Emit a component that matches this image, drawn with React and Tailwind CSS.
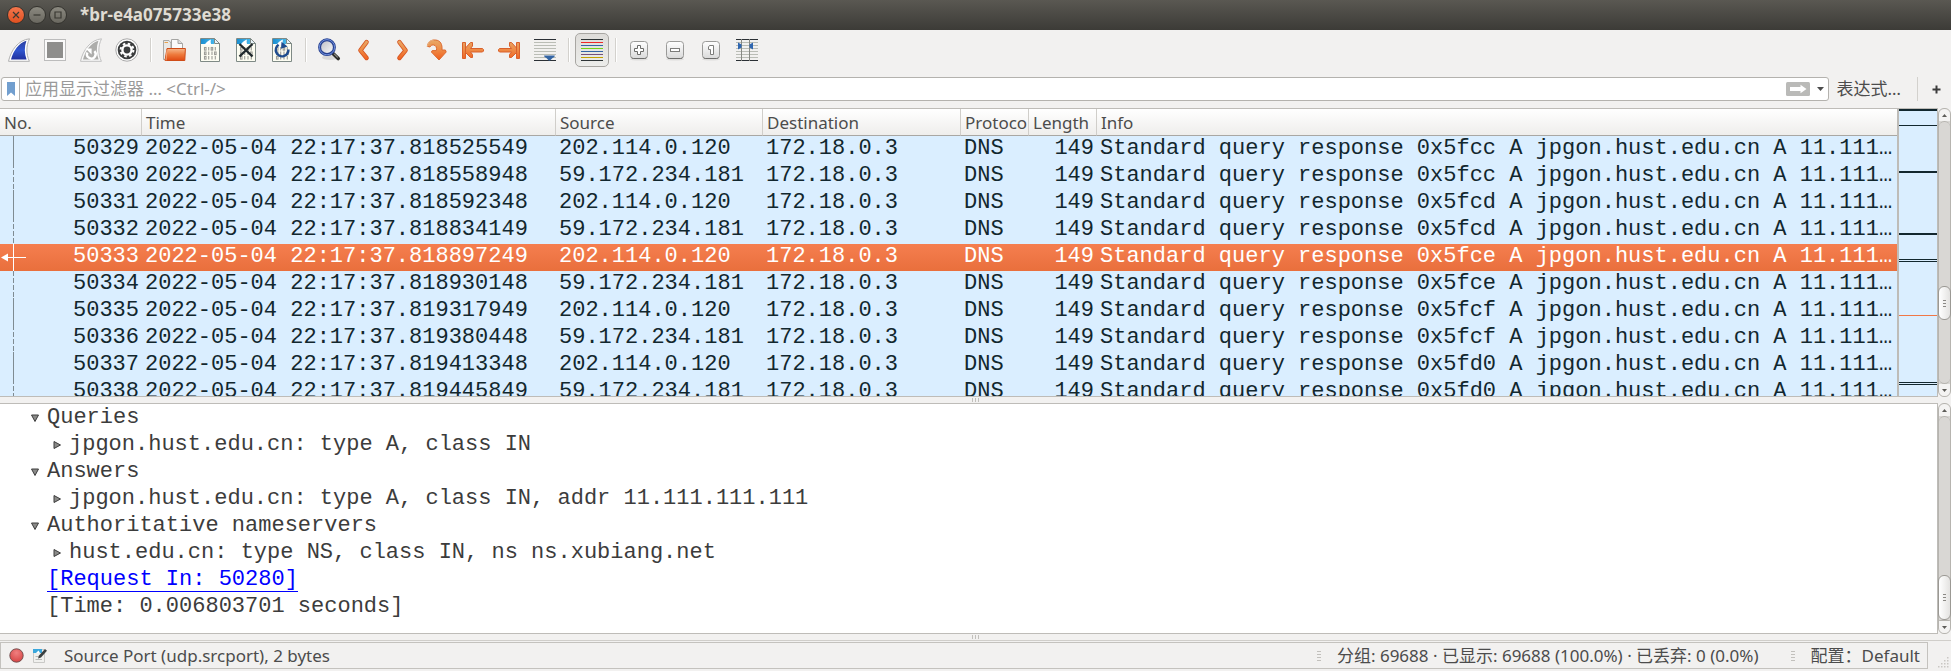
import React from "react";

const UI = "font-['Noto_Sans','Noto_Sans_CJK_SC',sans-serif]";
const MONO = "font-['Liberation_Mono','DejaVu_Sans_Mono',monospace]";

const packets = [
  ["50329", "2022-05-04 22:17:37.818525549", "202.114.0.120", "0x5fcc"],
  ["50330", "2022-05-04 22:17:37.818558948", "59.172.234.181", "0x5fcc"],
  ["50331", "2022-05-04 22:17:37.818592348", "202.114.0.120", "0x5fcd"],
  ["50332", "2022-05-04 22:17:37.818834149", "59.172.234.181", "0x5fcd"],
  ["50333", "2022-05-04 22:17:37.818897249", "202.114.0.120", "0x5fce"],
  ["50334", "2022-05-04 22:17:37.818930148", "59.172.234.181", "0x5fce"],
  ["50335", "2022-05-04 22:17:37.819317949", "202.114.0.120", "0x5fcf"],
  ["50336", "2022-05-04 22:17:37.819380448", "59.172.234.181", "0x5fcf"],
  ["50337", "2022-05-04 22:17:37.819413348", "202.114.0.120", "0x5fd0"],
  ["50338", "2022-05-04 22:17:37.819445849", "59.172.234.181", "0x5fd0"],
];
const selected = "50333";

/* ---------- toolbar icons ---------- */

function Svg({ children }) {
  return (
    <svg width="24" height="24" viewBox="0 0 24 24" className="block shrink-0" aria-hidden="true">
      {children}
    </svg>
  );
}

function Defs() {
  return (
    <svg width="0" height="0" className="absolute" aria-hidden="true">
      <defs>
        <linearGradient id="blue" x1="0" y1="0" x2="0" y2="1">
          <stop offset="0" stopColor="#2b3f9e" />
          <stop offset="0.5" stopColor="#2f55cf" />
          <stop offset="1" stopColor="#1f2f9e" />
        </linearGradient>
        <linearGradient id="orange" x1="0" y1="0" x2="0" y2="24" gradientUnits="userSpaceOnUse">
          <stop offset="0.1" stopColor="#e8a866" />
          <stop offset="0.5" stopColor="#ee8a45" />
          <stop offset="0.9" stopColor="#f0601f" />
        </linearGradient>
        <linearGradient id="folder" x1="0" y1="0" x2="0" y2="1">
          <stop offset="0" stopColor="#f6b98c" />
          <stop offset="0.5" stopColor="#ee7a3c" />
          <stop offset="1" stopColor="#e04a12" />
        </linearGradient>
        <linearGradient id="key" x1="0" y1="0" x2="0" y2="1">
          <stop offset="0" stopColor="#ffffff" />
          <stop offset="1" stopColor="#d9d9d9" />
        </linearGradient>
        <linearGradient id="sky" x1="0" y1="0" x2="1" y2="0">
          <stop offset="0" stopColor="#1c8fd0" />
          <stop offset="1" stopColor="#45b6ea" />
        </linearGradient>
        <linearGradient id="lens" x1="0" y1="0" x2="1" y2="1">
          <stop offset="0" stopColor="#b9b9c0" />
          <stop offset="1" stopColor="#ffffff" />
        </linearGradient>
        <radialGradient id="red" cx="0.5" cy="0.3" r="0.7">
          <stop offset="0" stopColor="#f08080" />
          <stop offset="1" stopColor="#d64545" />
        </radialGradient>
      </defs>
    </svg>
  );
}

const Fin = () => (
  <Svg>
    <path d="M1.5 23.3C4 12 11.5 1.8 22.5 0.8C19 8 19 16 22.4 23.3Z" fill="#fff" stroke="#b0b0b0" />
    <path d="M4 21.6C6.4 12.6 12 4.8 19.4 2.8C17.2 9 17.4 15.6 19.6 21.6Z" fill="url(#blue)" />
  </Svg>
);
const Stop = () => (
  <Svg>
    <rect x="1.5" y="1.5" width="21" height="21" fill="#fafafa" stroke="#bcbcbc" />
    <rect x="4" y="4" width="16" height="16" fill="#8e8e8c" />
  </Svg>
);
const Restart = () => (
  <Svg>
    <path d="M1.5 23.3C4 12 11.5 1.8 22.5 0.8C19 8 19 16 22.4 23.3Z" fill="#f8f8f8" stroke="#c0c0c0" />
    <path d="M4 21.6C6.4 12.6 12 4.8 19.4 2.8C17.2 9 17.4 15.6 19.6 21.6Z" fill="#adadab" />
    <path d="M8.4 14.4A4.3 4.3 0 1 0 15.4 13.2" fill="none" stroke="#fff" strokeWidth="2.4" />
    <path d="M6.6 10.6H12.6V16.4Z" fill="#fff" />
  </Svg>
);
const Options = () => (
  <Svg>
    <circle cx="12" cy="12" r="11.2" fill="#fff" stroke="#a9a9a9" />
    <circle cx="12" cy="12" r="9.3" fill="#3b3d3e" />
    <circle cx="12" cy="12" r="4.6" fill="none" stroke="#fff" strokeWidth="2.4" />
    <circle cx="12" cy="12" r="6.4" fill="none" stroke="#fff" strokeWidth="2" strokeDasharray="2.5 2.526" />
  </Svg>
);
const Open = () => (
  <Svg>
    <path d="M1.5 2.5H7L9 5V21.5H1.5Z" fill="#e9e9e7" stroke="#a9a9a7" />
    <path d="M2.5 4.5H6" stroke="#e8a24f" />
    <path d="M9.5 1.5H16L20.5 5.5V14H9.5Z" fill="#fbfbfb" stroke="#a5a5a3" />
    <path d="M16 1.5V5.5H20.5" fill="#ddd" stroke="#a5a5a3" />
    <path d="M5 10.5H23.4L22.8 22.5H3Z" fill="url(#folder)" stroke="#cf4c18" />
    <path d="M4 22.4L5 12" stroke="#f4a578" />
  </Svg>
);
function DocBase({ children }) {
  return (
    <Svg>
      <path d="M2.5 0.5H16.5L21.5 5.5V23.5H2.5Z" fill="#fdfdf2" stroke="#7f8a86" />
      <path d="M3 1H16V6H3Z" fill="url(#sky)" />
      <path d="M6.5 7C8 4.5 10 2.6 13 1.6C12.4 3.6 12.6 5.4 13.6 7Z" fill="#fff" />
      <path d="M16.5 0.5V5.5H21.5Z" fill="#e8f3f8" stroke="#7f8a86" />
      <g fill="none" stroke="#9c9c96" strokeWidth="1.1">
        {[9.5, 14, 18.5].map((y, r) => (
          <g key={y}>
            <rect x="6.5" y={y} width="1.5" height="2.6" />
            <path d={`M10.7 ${y - 0.5}v3.6`} />
            {r === 2 ? <path d={`M14 ${y - 0.5}v3.6`} /> : r === 0 ? <rect x="13.2" y={y} width="1.5" height="2.6" /> : <path d={`M14 ${y - 0.5}v3.6`} />}
            {r === 1 ? <rect x="16.6" y={y} width="1.5" height="2.6" /> : <path d={`M17.3 ${y - 0.5}v3.6`} />}
          </g>
        ))}
      </g>
      {children}
    </Svg>
  );
}
const Save = () => <DocBase />;
const Close = () => (
  <DocBase>
    <path d="M5.5 6L18.5 18.5M18.5 6L5.5 18.5" stroke="#20292d" strokeWidth="2.4" fill="none" />
  </DocBase>
);
const Reload = () => (
  <DocBase>
    <path d="M8.6 6.8A6.3 6.3 0 1 0 18.4 11.5" stroke="#1f4c8e" strokeWidth="2.5" fill="none" />
    <path d="M11.5 3.8L17.6 8.4L11 10.8Z" fill="#1f4c8e" />
  </DocBase>
);
const Find = () => (
  <Svg>
    <ellipse cx="13" cy="19.5" rx="8" ry="2.6" fill="#000" opacity="0.1" />
    <path d="M16 15.4L21.2 20.6" stroke="#2c2c28" strokeWidth="3.6" strokeLinecap="round" />
    <path d="M17.4 16.2L20.4 19.2" stroke="#8c8c86" strokeWidth="1.2" strokeLinecap="round" />
    <circle cx="10" cy="9.2" r="7.4" fill="url(#lens)" stroke="#27408f" strokeWidth="3" />
    <circle cx="10" cy="9.2" r="7.6" fill="none" stroke="#6f8fdc" strokeWidth="1" />
  </Svg>
);
function Stroke({ d }) {
  return (
    <Svg>
      <path d={d} fill="none" stroke="#d5521f" strokeWidth="4.4" strokeLinecap="round" strokeLinejoin="round" />
      <path d={d} fill="none" stroke="url(#orange)" strokeWidth="2.8" strokeLinecap="round" strokeLinejoin="round" />
    </Svg>
  );
}
const Back = () => <Stroke d="M13.6 4.1L7.4 12.4L13.6 20" />;
const Forward = () => <Stroke d="M10.4 4.1L16.6 12.4L10.4 20" />;
const GoTo = () => (
  <Svg>
    <path
      d="M2.3 8.3C3 3.6 7 1.6 10.6 2C15.4 2.5 17.4 6 17 12H20.4L21.2 14L14 22L6.4 14L7.2 12.6H11.4C12 9.4 11 7.4 8.6 7C6.6 6.8 5.6 7.6 5 9Z"
      fill="url(#orange)"
      stroke="#dd6a30"
      strokeLinejoin="round"
    />
    <path d="M2.3 8.3C3 4.4 6 2.2 9 2" fill="none" stroke="#e9b07c" strokeWidth="1.2" />
  </Svg>
);
/* Arrow with an end bar, shared by "first" and "last" */
const First = () => (
  <Svg>
    <path d="M1.5 4.5H4.5V10L9.5 4.5H11.5V8L9.5 10.5H21.5L22.5 11.5V13L21.5 14H9.5L11.5 16.5V19.5H9.5L4.5 14.5V20.5H1.5Z" fill="url(#orange)" stroke="#d9602c" strokeLinejoin="round" />
    <path d="M4.5 10V14.5" stroke="#d9602c" />
  </Svg>
);
const Last = () => (
  <Svg>
    <path d="M22.5 4.5H19.5V10L14.5 4.5H12.5V8L14.5 10.5H2.5L1.5 11.5V13L2.5 14H14.5L12.5 16.5V19.5H14.5L19.5 14.5V20.5H22.5Z" fill="url(#orange)" stroke="#d9602c" strokeLinejoin="round" />
    <path d="M19.5 10V14.5" stroke="#d9602c" />
  </Svg>
);
const Lines = () => (
  <>
    {[4, 7, 10, 13, 16, 19].map((y) => (
      <path key={y} d={`M1 ${y + 0.5}H23`} stroke="#babdb6" />
    ))}
    <path d="M1 1.5H23M1 22.5H23" stroke="#2b3035" />
  </>
);
const AutoScroll = () => (
  <Svg>
    <Lines />
    <path d="M11 17.5H21.8Q22 19 19.6 20L17 22.6H15.8L13.4 20Q11 19 11 17.5Z" fill="#3465a4" />
  </Svg>
);
const Colorize = () => (
  <Svg>
    {["#2e3436", "#ef2929", "#3465a4", "#73d216", "#3465a4", "#75507b", "#c4a000", "#2e3436"].map((c, i) => (
      <path key={i} d={`M1 ${1.5 + i * 3}H23`} stroke={c} />
    ))}
  </Svg>
);
function Key({ children }) {
  return (
    <Svg>
      <ellipse cx="12" cy="21.2" rx="9" ry="1.4" fill="#000" opacity="0.08" />
      <rect x="3.5" y="3.5" width="17" height="17" rx="3" fill="url(#key)" stroke="#9a9a98" />
      <path d="M4.5 19.6Q5 20.5 6.5 20.5H17.5Q19 20.5 19.5 19.6" fill="none" stroke="#6e6e6c" />
      {children}
    </Svg>
  );
}
const ZoomIn = () => (
  <Key>
    <path d="M10.5 7.5H13.5V10.5H16.5V13.5H13.5V16.5H10.5V13.5H7.5V10.5H10.5Z" fill="#fff" stroke="#6c6c6a" />
  </Key>
);
const ZoomOut = () => (
  <Key>
    <rect x="7.5" y="10.5" width="9" height="3" fill="#fff" stroke="#7c7c7a" />
  </Key>
);
const ZoomReset = () => (
  <Key>
    <path d="M10.5 7.5H14.5V16.5H11.5V11.5H9.5V9Z" fill="#fff" stroke="#7c7c7a" />
  </Key>
);
const FitColumns = () => (
  <Svg>
    <Lines />
    <path d="M6.5 1V23M14.5 1V23" stroke="#888a85" />
    <path d="M3 4.5L6.5 6.5V9.5L3 11.5ZM18 4.5L14.5 6.5V9.5L18 11.5Z" fill="#2f66b0" />
  </Svg>
);

/* ---------- pieces of the window ---------- */

function Tool({ label, icon: Icon, pressed }) {
  return (
    <button
      type="button"
      aria-label={label}
      title={label}
      aria-pressed={pressed}
      className={
        pressed
          ? "flex h-[34px] w-[34px] mx-px items-center justify-center rounded-[5px] border border-[#a8a6a2] bg-gradient-to-b from-[#dedcd9] to-[#ececea]"
          : "flex h-9 w-9 items-center justify-center"
      }
    >
      <Icon />
    </button>
  );
}

function Divider() {
  return (
    <span className="flex h-6 w-[11px] shrink-0 justify-center">
      <span className="w-px bg-[#d3d1cd]" />
      <span className="w-px bg-white" />
    </span>
  );
}

function TitleButton({ label, close, children }) {
  return (
    <button
      type="button"
      aria-label={label}
      className={
        close
          ? "flex size-[18px] items-center justify-center rounded-full border border-[#34332e] bg-gradient-to-b from-[#f4764c] to-[#e0501f]"
          : "flex size-[18px] items-center justify-center rounded-full border border-[#34332e] bg-gradient-to-b from-[#8b8980] to-[#6a6860]"
      }
    >
      <svg width="10" height="10" viewBox="0 0 10 10" fill="none" stroke="#3a3933" strokeWidth="1.2" aria-hidden="true">
        {children}
      </svg>
    </button>
  );
}

function ScrollBar({ before, handle, after }) {
  return (
    <div className="flex w-[13px] shrink-0 flex-col rounded-[6px] border border-[#b6b4af] bg-[#d9d7d4]" aria-hidden="true">
      <span className="flex h-3 shrink-0 items-center justify-center rounded-t-[6px] bg-[#f4f3f2]">
        <svg width="5" height="3" viewBox="0 0 5 3">
          <path d="M0 3L2.5 0L5 3Z" fill="#5d5c58" />
        </svg>
      </span>
      <span className={`${before} basis-0 rounded-t-[6px] border-t border-[#b6b4af]`} />
      <span
        className={`${handle} -mx-px flex shrink-0 flex-col items-center justify-center gap-0.5 rounded-[6px] border border-[#9b9994] bg-gradient-to-r from-white to-[#e4e3e1]`}
      >
        <span className="h-px w-[3px] bg-[#8b8985]" />
        <span className="h-px w-[3px] bg-[#8b8985]" />
        <span className="h-px w-[3px] bg-[#8b8985]" />
      </span>
      <span className={`${after} basis-0 rounded-b-[6px] border-b border-[#b6b4af]`} />
      <span className="flex h-3 shrink-0 items-center justify-center rounded-b-[6px] bg-[#f4f3f2]">
        <svg width="5" height="3" viewBox="0 0 5 3">
          <path d="M0 0L2.5 3L5 0Z" fill="#5d5c58" />
        </svg>
      </span>
    </div>
  );
}

function Splitter() {
  return (
    <div className="flex h-1.5 shrink-0 items-center justify-center gap-0.5">
      <span className="h-1 w-px bg-[#c2c0bc]" />
      <span className="h-1 w-px bg-[#c2c0bc]" />
      <span className="h-1 w-px bg-[#c2c0bc]" />
    </div>
  );
}

function Relation({ dashed, active }) {
  const color = active ? "#ffffff" : "#7f8b92";
  return (
    <svg width="27" height="27" viewBox="0 0 27 27" className="block shrink-0" aria-hidden="true">
      <path d="M13.5 0V27" stroke={color} strokeDasharray={dashed ? "5 2" : undefined} />
      {active && (
        <>
          <path d="M6 13.5H26" stroke="#fff" />
          <path d="M1 13.5L8 9.5V17.5Z" fill="#fff" />
        </>
      )}
    </svg>
  );
}

const headCell = "border-r border-[#d0ceca] pt-px pl-1 text-left font-normal whitespace-nowrap";
const cell = "p-0 pl-[3px] pb-0.5 leading-[25px] whitespace-pre";

function PacketList() {
  return (
    <div className="min-w-0 flex-1 overflow-hidden border-t border-b border-[#bebcb8] bg-[#daeeff]">
      <table className="w-full table-fixed border-separate border-spacing-0">
        <colgroup>
          <col className="w-[142px]" />
          <col className="w-[414px]" />
          <col className="w-[207px]" />
          <col className="w-[198px]" />
          <col className="w-[68px]" />
          <col className="w-[68px]" />
          <col />
        </colgroup>
        <thead className={`${UI} text-[17px] leading-[25px] text-[#4c4c4c]`}>
          <tr className="h-[27px] bg-gradient-to-b from-white to-[#eeedeb]">
            {["No.", "Time", "Source", "Destination", "Protoco", "Length", "Info"].map((h, i) => (
              <th key={h} scope="col" className={`${headCell} border-b border-b-[#a9a7a3] ${i === 6 ? "border-r-0" : ""}`}>
                {h}
              </th>
            ))}
          </tr>
        </thead>
        <tbody className={`${MONO} text-[22px] text-[#12272e]`}>
          {packets.map(([no, time, src, id], i) => {
            const on = no === selected;
            return (
              <tr
                key={no}
                aria-selected={on}
                className={on ? "h-[27px] bg-gradient-to-b from-[#f57e4f] to-[#e96f3c] text-white" : "h-[27px]"}
              >
                <td className="p-0">
                  <div className="flex h-[27px] justify-between">
                    <Relation dashed={i % 2 === 1} active={on} />
                    <span className="pr-[3px] leading-[25px]">{no}</span>
                  </div>
                </td>
                <td className={cell}>{time}</td>
                <td className={cell}>{src}</td>
                <td className={cell}>172.18.0.3</td>
                <td className={cell}>DNS</td>
                <td className={`${cell} pr-[3px] text-right`}>149</td>
                <td className={cell}>{`Standard query response ${id} A jpgon.hust.edu.cn A 11.111…`}</td>
              </tr>
            );
          })}
        </tbody>
      </table>
    </div>
  );
}

function MiniMap() {
  return (
    <svg
      className="block h-full w-[41px] shrink-0 border-t border-r border-b border-l-2 border-[#bebcb8] bg-[#daeeff]"
      viewBox="0 0 38 287"
      preserveAspectRatio="none"
      aria-hidden="true"
    >
      <g fill="#12272e">
        <rect x="0" y="0" width="38" height="2" />
        <rect x="0" y="16" width="38" height="1" />
        <rect x="0" y="62" width="38" height="2" />
        <rect x="0" y="124" width="38" height="2" />
        <rect x="0" y="150" width="38" height="1" />
        <rect x="0" y="152" width="38" height="1" />
        <rect x="0" y="273" width="38" height="1" />
        <rect x="0" y="275" width="38" height="1" />
      </g>
      <rect x="0" y="206" width="38" height="1" fill="#f07746" />
    </svg>
  );
}

function Arrow({ open }) {
  return (
    <svg width="8" height="8" viewBox="0 0 8 8" className="block shrink-0" aria-hidden="true">
      <path d={open ? "M0.5 1H7.5L4 7.5Z" : "M1 0.5V7.5L7.5 4Z"} fill="#8a8a88" stroke="#3c3c3c" />
    </svg>
  );
}

function Branch({ title, child }) {
  return (
    <li>
      <button type="button" aria-expanded="true" className="flex h-[27px] items-center gap-2 pb-0.5 pl-[31px] leading-[25px]">
        <Arrow open />
        {title}
      </button>
      <ul>
        <li>
          <button type="button" aria-expanded="false" className="flex h-[27px] items-center gap-2 pb-0.5 pl-[53px] leading-[25px]">
            <Arrow />
            {child}
          </button>
        </li>
      </ul>
    </li>
  );
}

function Grip() {
  return (
    <span className="flex flex-col gap-0.5" aria-hidden="true">
      <span className="h-px w-1 bg-[#c2c0bc]" />
      <span className="h-px w-1 bg-[#c2c0bc]" />
      <span className="h-px w-1 bg-[#c2c0bc]" />
      <span className="h-px w-1 bg-[#c2c0bc]" />
    </span>
  );
}

export default function App() {
  return (
    <div className={`${UI} flex h-screen min-h-[480px] flex-col overflow-hidden bg-[#f2f1f0] text-[17px] text-[#4c4c4c]`}>
      <Defs />

      <header className="flex h-[30px] shrink-0 items-center gap-[3px] bg-gradient-to-b from-[#5a5852] to-[#3c3b37] pl-[7px]">
        <TitleButton label="Close" close>
          <path d="M2 2L8 8M8 2L2 8" />
        </TitleButton>
        <TitleButton label="Minimize">
          <path d="M1.5 5H8.5" />
        </TitleButton>
        <TitleButton label="Maximize">
          <path d="M2 2H8V8H2Z" />
        </TitleButton>
        <h1 className="pl-[10px] text-[17px] font-bold leading-6 text-[#dfdbd2]">*br-e4a075733e38</h1>
      </header>

      <div role="toolbar" className="flex h-[40px] shrink-0 items-center pl-px">
        <Tool label="Start capture" icon={Fin} />
        <Tool label="Stop capture" icon={Stop} />
        <Tool label="Restart capture" icon={Restart} />
        <Tool label="Capture options" icon={Options} />
        <Divider />
        <Tool label="Open" icon={Open} />
        <Tool label="Save" icon={Save} />
        <Tool label="Close file" icon={Close} />
        <Tool label="Reload file" icon={Reload} />
        <Divider />
        <Tool label="Find packet" icon={Find} />
        <Tool label="Previous packet" icon={Back} />
        <Tool label="Next packet" icon={Forward} />
        <Tool label="Go to packet" icon={GoTo} />
        <Tool label="First packet" icon={First} />
        <Tool label="Last packet" icon={Last} />
        <Tool label="Auto scroll" icon={AutoScroll} />
        <Divider />
        <Tool label="Colorize" icon={Colorize} pressed />
        <Divider />
        <Tool label="Zoom in" icon={ZoomIn} />
        <Tool label="Zoom out" icon={ZoomOut} />
        <Tool label="Normal size" icon={ZoomReset} />
        <Tool label="Resize columns" icon={FitColumns} />
      </div>

      <div className="flex h-[38px] shrink-0 items-center pl-px">
        <div className="flex h-6 min-w-0 flex-1 items-stretch rounded-[3px] border border-[#b4b2ae] bg-white">
          <button type="button" aria-label="Bookmarks" className="flex w-[18px] shrink-0 items-center justify-center border-r border-[#b4b2ae]">
            <svg width="8" height="14" viewBox="0 0 8 14" aria-hidden="true">
              <path d="M0 0H8V14L4 10.5L0 14Z" fill="#729fcf" />
            </svg>
          </button>
          <input
            type="text"
            aria-label="Display filter"
            placeholder="应用显示过滤器 … <Ctrl-/>"
            className="min-w-0 flex-1 bg-transparent pl-[5px] leading-[22px] outline-none placeholder:text-[#9a9a9a]"
          />
          <button type="button" aria-label="Apply filter" className="flex items-center">
            <svg width="24" height="14" viewBox="0 0 24 14" aria-hidden="true">
              <rect width="24" height="14" rx="1.5" fill="#babab8" />
              <path d="M4 5H14.5V2.8L20.5 7L14.5 11.2V9H4Z" fill="#fff" />
            </svg>
          </button>
          <button type="button" aria-label="Filter history" className="flex w-[18px] items-center justify-center pl-1">
            <svg width="7" height="4" viewBox="0 0 7 4" aria-hidden="true">
              <path d="M0 0H7L3.5 4Z" fill="#4c4c4c" />
            </svg>
          </button>
        </div>
        <button type="button" className="pl-2 leading-6">表达式…</button>
        <span className="ml-4 h-6 w-px bg-[#d3d1cd]" />
        <button type="button" aria-label="Add filter button" className="flex w-[33px] items-center justify-center pl-1">
          <svg width="9" height="9" viewBox="0 0 9 9" aria-hidden="true">
            <path d="M4.5 0.5V8.5M0.5 4.5H8.5" stroke="#3c3c3c" strokeWidth="2" />
          </svg>
        </button>
      </div>

      <section aria-label="Packet list" className="flex min-h-0 grow-[289] basis-0">
        <PacketList />
        <MiniMap />
        <ScrollBar before="grow-[165]" handle="h-[34px]" after="grow-[63]" />
      </section>

      <Splitter />

      <section aria-label="Packet details" className="flex min-h-0 grow-[231] basis-0">
        <ul className={`${MONO} min-w-0 flex-1 overflow-hidden border-t border-r border-b border-[#bebcb8] bg-white pt-px text-[22px] text-[#3c3c3c]`}>
          <Branch title="Queries" child="jpgon.hust.edu.cn: type A, class IN" />
          <Branch title="Answers" child="jpgon.hust.edu.cn: type A, class IN, addr 11.111.111.111" />
          <Branch title="Authoritative nameservers" child="hust.edu.cn: type NS, class IN, ns ns.xubiang.net" />
          <li className="flex h-[27px] pl-[47px]">
            <a href="#50280" className="h-[25px] border-b border-[#0000ff] leading-[25px] text-[#0000ff]">[Request In: 50280]</a>
          </li>
          <li className="flex h-[27px] pb-0.5 pl-[47px] leading-[25px]">[Time: 0.006803701 seconds]</li>
        </ul>
        <ScrollBar before="grow-[159]" handle="h-[45px]" after="grow-0" />
      </section>

      <Splitter />

      <footer className="flex h-[31px] shrink-0 items-start border-t border-[#d0ceca] pt-px">
        <div className="flex h-[27px] min-w-0 flex-1 items-center border border-[#c4c2be] pr-[7px] pl-2 leading-6">
          <button type="button" aria-label="Expert information">
            <svg width="15" height="15" viewBox="0 0 15 15" className="block" aria-hidden="true">
              <circle cx="7.5" cy="7.5" r="6.7" fill="url(#red)" stroke="#6b4a4a" strokeWidth="0.9" />
            </svg>
          </button>
          <button type="button" aria-label="Capture comment" className="pl-2">
            <svg width="16" height="16" viewBox="0 0 16 16" className="block" aria-hidden="true">
              <path d="M1.5 1.5H12.5V14.5H1.5Z" fill="#f0f0ee" stroke="#c9c9c7" />
              <path d="M1 1H10V5H1Z" fill="#3ba7dc" />
              <path d="M4 5L6.5 2.4L8 5Z" fill="#fff" />
              <path d="M3.5 8.5H7M3.5 11.5H10" stroke="#b9b9b7" />
              <path d="M6 10.5L7 7.5L13 1L15 2.8L9 9.4Z" fill="#3a3f40" />
            </svg>
          </button>
          <span className="min-w-0 flex-1 truncate pl-4">Source Port (udp.srcport), 2 bytes</span>
          <Grip />
          <span className="pr-8 pl-4 whitespace-nowrap">分组: 69688 · 已显示: 69688 (100.0%) · 已丢弃: 0 (0.0%)</span>
          <Grip />
          <button type="button" className="pl-4 whitespace-nowrap">配置：Default</button>
        </div>
        <svg width="23" height="28" viewBox="0 0 23 28" className="block shrink-0" aria-hidden="true">
          <g fill="#c9c7c3">
            {[0, 1, 2, 3].map((r) =>
              Array.from({ length: r + 1 }, (_, k) => <rect key={`${r}-${k}`} x={19 - k * 3} y={15 + r * 3} width="1.5" height="1.5" />)
            )}
          </g>
        </svg>
      </footer>
    </div>
  );
}
